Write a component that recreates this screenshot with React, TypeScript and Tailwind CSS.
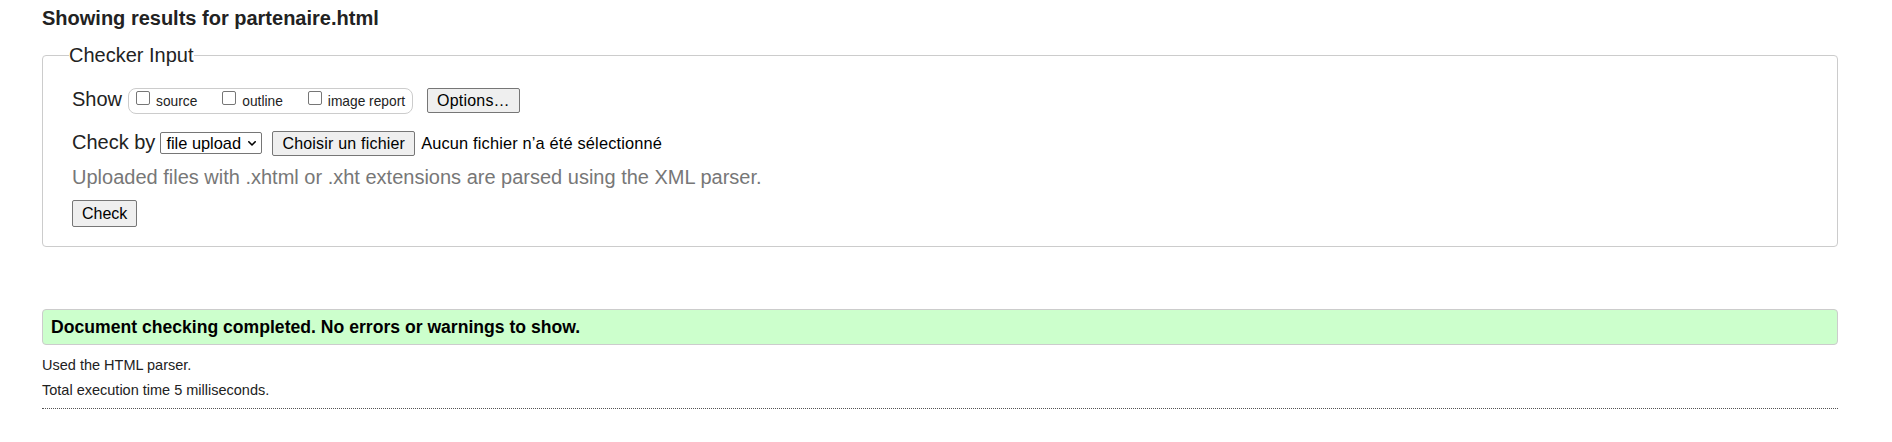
import React from "react";

function Checkbox() {
  return (
    <span className="relative top-[-1px] inline-block w-[14px] h-[14px] border border-[#767676] rounded-[2px] bg-white shrink-0" />
  );
}

function Option({ label }: { label: string }) {
  return (
    <label className="flex items-baseline">
      <Checkbox />
      <span className="ml-[6px]">{label}</span>
    </label>
  );
}

function Button({ children, className = "" }: { children: React.ReactNode; className?: string }) {
  return (
    <button
      type="button"
      className={`border border-[#767676] bg-[#efefef] rounded-[2px] px-[9px] py-[2px] text-[16px] leading-[19px] text-black ${className}`}
    >
      {children}
    </button>
  );
}

export default function App() {
  return (
    <div
      className="min-h-[442px] bg-white pl-[42px] pr-[54px] pt-[7px] text-[#222]"
      style={{ fontFamily: '"Liberation Sans", Arial, sans-serif' }}
    >
      <h2 className="text-[20px] font-bold leading-[23px]">Showing results for partenaire.html</h2>

      <fieldset className="mt-[14px] border border-[#cccccc] rounded-[4px] pl-[29px] pr-4 pt-[21px] pb-[19px]">
        <legend className="ml-[-3px] text-[20px] leading-[23px]">Checker Input</legend>

        <div className="flex items-baseline h-[26px]">
          <span className="text-[20px] leading-[23px]">Show</span>
          <div className="ml-[6px] flex items-baseline gap-[25px] border border-[#cccccc] rounded-[8px] pl-[7px] pr-[7px] py-[3px] text-[13.75px] leading-[16px]">
            <Option label="source" />
            <Option label="outline" />
            <Option label="image report" />
          </div>
          <Button className="ml-[14px] tracking-[0.2px]">Options…</Button>
        </div>

        <div className="mt-[17px] flex items-baseline">
          <span className="text-[20px] leading-[23px]">Check by</span>
          <div className="ml-[5px] flex items-baseline w-[102px] h-[22px] border border-[#767676] rounded-[2px] bg-white pl-[5px] pr-[5px] text-[16.4px] leading-[20px] text-black">
            <span>file upload</span>
            <svg
              viewBox="0 0 8 5"
              className="ml-auto w-[8px] h-[5px] self-center"
              fill="none"
              stroke="#000"
              strokeWidth="1.6"
              strokeLinecap="round"
              strokeLinejoin="round"
            >
              <polyline points="0.8,0.8 4,4 7.2,0.8" />
            </svg>
          </div>
          <Button className="ml-[10px] text-[16.4px] tracking-[0.2px]">Choisir un fichier</Button>
          <span className="ml-[6px] text-[16.4px] leading-[19px] tracking-[0.15px] text-black">
            Aucun fichier n’a été sélectionné
          </span>
        </div>

        <p className="mt-[10px] text-[20px] leading-[23px] text-[#777777]">
          Uploaded files with .xhtml or .xht extensions are parsed using the XML parser.
        </p>

        <div className="mt-[11px] flex">
          <Button className="py-[3px]">Check</Button>
        </div>
      </fieldset>

      <div className="mt-[62px] border border-[#cccccc] rounded-[4px] bg-[#ccffcc] pl-[8px] py-[7px] text-[17.6px] leading-[20px] font-bold text-black">
        Document checking completed. No errors or warnings to show.
      </div>

      <p className="mt-[12px] text-[14.5px] leading-[17px]">Used the HTML parser.</p>
      <p className="mt-[8px] text-[14.5px] leading-[17px]">Total execution time 5 milliseconds.</p>

      <div className="mt-[9px] border-t border-dotted border-[#555555]" />
    </div>
  );
}
